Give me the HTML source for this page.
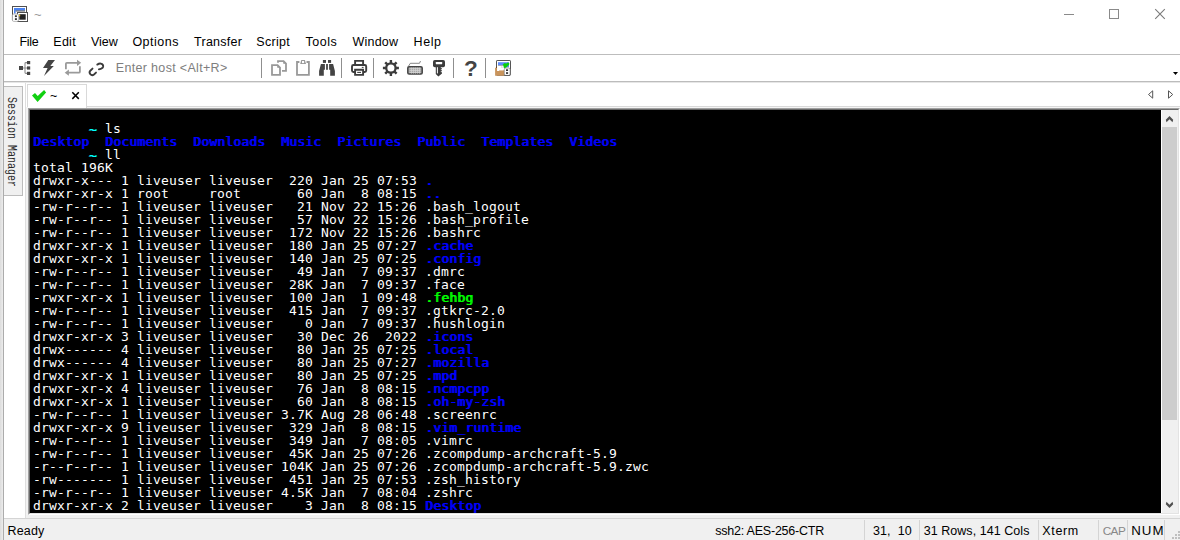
<!DOCTYPE html>
<html><head><meta charset="utf-8"><title>~</title>
<style>
html,body{margin:0;padding:0;}
body{width:1180px;height:540px;position:relative;overflow:hidden;background:#fff;font-family:"Liberation Sans",sans-serif;font-size:12.5px;color:#000;}
.abs{position:absolute;}
#leftedge{left:0;top:0;width:3px;height:540px;background:linear-gradient(90deg,#dcdcdc,#ececec);}
#leftline{left:3px;top:0;width:1px;height:540px;background:#acacac;}
#title{left:34px;top:7px;font-size:13px;color:#999;}
.t{position:absolute;white-space:nowrap;line-height:16px;height:16px;}
#menu .t{top:34px;}
#menuline{left:4px;top:54px;width:1176px;height:1px;background:#bdbdbd;}
#tbline{left:4px;top:81px;width:1176px;height:1px;background:#bcbcbc;}
#tbline2{left:4px;top:82px;width:1176px;height:1px;background:#e6e6e6;}
#host{left:116px;top:60px;color:#7e7e7e;}
.sep{position:absolute;top:58px;width:1px;height:20px;background:#8f8f8f;}
#sm{left:4px;top:86px;width:18px;height:108px;background:#f0f0f0;border:1px solid #bcbcbc;border-left:none;}
#smt{left:16.5px;top:96.5px;font-family:"Liberation Mono",monospace;font-size:12px;line-height:12px;color:#2a2a2a;transform-origin:0 0;transform:rotate(90deg) scaleX(0.833);white-space:nowrap;}
#vline{left:25px;top:83px;width:1px;height:435px;background:#dedede;}
#tab{left:27px;top:84px;width:58px;height:23px;border:1px solid #d9d9d9;border-bottom:none;background:#fff;}
#tabline{left:86px;top:106px;width:1094px;height:1px;background:#d9d9d9;}
#tabline2{left:87px;top:107px;width:1093px;height:1px;background:#f4f4f4;}
#lband{left:26px;top:107px;width:2px;height:408px;background:#f2f2f2;}
#tabt{left:50px;top:88px;}
#termborder{left:28px;top:108px;width:1148px;height:403px;border:2px solid;border-color:#a0a0a0 #fff #fff #a0a0a0;background:#000;}
#termborder2{left:29px;top:109px;width:1148px;height:403px;border:1px solid;border-color:#696969 #e3e3e3 #e3e3e3 #696969;}
#term{left:30px;top:110px;width:1131px;height:403px;background:#000;overflow:hidden;}
#sb{left:1161px;top:110px;width:16px;height:403px;background:#f0f0f0;border-left:1px solid #fff;}
#thumb{left:1162px;top:127px;width:15px;height:293px;background:#cdcdcd;}
#text{position:absolute;left:3px;top:12px;font-family:"DejaVu Sans Mono","Liberation Mono",monospace;font-size:13px;letter-spacing:0.173px;color:#fff;white-space:pre;line-height:13px;}
.ln{height:13px;}
.b{color:#0000ff;text-shadow:1px 0 0 #0000ff;}
.g{color:#00ff00;text-shadow:1px 0 0 #00ff00;}
.c{color:#00ffff;text-shadow:1px 0 0 #00ffff;position:relative;top:1px;left:-0.6px;}
#belowterm{left:26px;top:515px;width:1154px;height:3px;background:#f0f0f0;}
#status{left:4px;top:518px;width:1176px;height:21px;background:#f0f0f0;border-top:1px solid #d4d4d4;}
#status .t{top:4px;}
.ssep{position:absolute;top:1px;width:1px;height:20px;background:#d4d4d4;}
</style></head><body>
<div class="abs" id="leftedge"></div><div class="abs" id="leftline"></div>
<div class="abs t" id="title">~</div>
<div id="menu">
<span class="t" id="m1" style="left:19.60px;letter-spacing:-0.367px;">File</span><span class="t" id="m2" style="left:53.30px;letter-spacing:0.267px;">Edit</span><span class="t" id="m3" style="left:91.00px;letter-spacing:-0.067px;">View</span><span class="t" id="m4" style="left:132.40px;letter-spacing:0.500px;">Options</span><span class="t" id="m5" style="left:194.00px;letter-spacing:0.271px;">Transfer</span><span class="t" id="m6" style="left:256.30px;letter-spacing:0.300px;">Script</span><span class="t" id="m7" style="left:305.50px;letter-spacing:0.525px;">Tools</span><span class="t" id="m8" style="left:352.50px;letter-spacing:0.220px;">Window</span><span class="t" id="m9" style="left:413.50px;letter-spacing:0.600px;">Help</span>
</div>
<div class="abs" id="menuline"></div>
<div class="abs t" id="host" style="left:115.80px;letter-spacing:0.324px;">Enter host &lt;Alt+R&gt;</div>
<div class="sep" style="left:261px"></div><div class="sep" style="left:341px"></div><div class="sep" style="left:373px"></div><div class="sep" style="left:453px"></div><div class="sep" style="left:485px"></div>
<div class="abs" id="tbline"></div><div class="abs" id="tbline2"></div>
<div class="abs" id="sm"></div>
<div class="abs" id="smt">Session Manager</div>
<div class="abs" id="vline"></div>
<div class="abs" id="tab"></div>
<div class="abs" id="tabline"></div><div class="abs" id="tabline2"></div><div class="abs" id="lband"></div>
<div class="abs t" id="tabt">~</div>
<div class="abs" id="termborder"></div><div class="abs" id="termborder2"></div>
<div class="abs" id="term"><div id="text"><div class="ln">       <span class="c">~</span> ls</div><div class="ln"><span class="b">Desktop</span>  <span class="b">Documents</span>  <span class="b">Downloads</span>  <span class="b">Music</span>  <span class="b">Pictures</span>  <span class="b">Public</span>  <span class="b">Templates</span>  <span class="b">Videos</span></div><div class="ln">       <span class="c">~</span> ll</div><div class="ln">total 196K</div><div class="ln">drwxr-x--- 1 liveuser liveuser  220 Jan 25 07:53 <span class="b">.</span></div><div class="ln">drwxr-xr-x 1 root     root       60 Jan  8 08:15 <span class="b">..</span></div><div class="ln">-rw-r--r-- 1 liveuser liveuser   21 Nov 22 15:26 .bash_logout</div><div class="ln">-rw-r--r-- 1 liveuser liveuser   57 Nov 22 15:26 .bash_profile</div><div class="ln">-rw-r--r-- 1 liveuser liveuser  172 Nov 22 15:26 .bashrc</div><div class="ln">drwxr-xr-x 1 liveuser liveuser  180 Jan 25 07:27 <span class="b">.cache</span></div><div class="ln">drwxr-xr-x 1 liveuser liveuser  140 Jan 25 07:25 <span class="b">.config</span></div><div class="ln">-rw-r--r-- 1 liveuser liveuser   49 Jan  7 09:37 .dmrc</div><div class="ln">-rw-r--r-- 1 liveuser liveuser  28K Jan  7 09:37 .face</div><div class="ln">-rwxr-xr-x 1 liveuser liveuser  100 Jan  1 09:48 <span class="g">.fehbg</span></div><div class="ln">-rw-r--r-- 1 liveuser liveuser  415 Jan  7 09:37 .gtkrc-2.0</div><div class="ln">-rw-r--r-- 1 liveuser liveuser    0 Jan  7 09:37 .hushlogin</div><div class="ln">drwxr-xr-x 3 liveuser liveuser   30 Dec 26  2022 <span class="b">.icons</span></div><div class="ln">drwx------ 4 liveuser liveuser   80 Jan 25 07:25 <span class="b">.local</span></div><div class="ln">drwx------ 4 liveuser liveuser   80 Jan 25 07:27 <span class="b">.mozilla</span></div><div class="ln">drwxr-xr-x 1 liveuser liveuser   80 Jan 25 07:25 <span class="b">.mpd</span></div><div class="ln">drwxr-xr-x 4 liveuser liveuser   76 Jan  8 08:15 <span class="b">.ncmpcpp</span></div><div class="ln">drwxr-xr-x 1 liveuser liveuser   60 Jan  8 08:15 <span class="b">.oh-my-zsh</span></div><div class="ln">-rw-r--r-- 1 liveuser liveuser 3.7K Aug 28 06:48 .screenrc</div><div class="ln">drwxr-xr-x 9 liveuser liveuser  329 Jan  8 08:15 <span class="b">.vim_runtime</span></div><div class="ln">-rw-r--r-- 1 liveuser liveuser  349 Jan  7 08:05 .vimrc</div><div class="ln">-rw-r--r-- 1 liveuser liveuser  45K Jan 25 07:26 .zcompdump-archcraft-5.9</div><div class="ln">-r--r--r-- 1 liveuser liveuser 104K Jan 25 07:26 .zcompdump-archcraft-5.9.zwc</div><div class="ln">-rw------- 1 liveuser liveuser  451 Jan 25 07:53 .zsh_history</div><div class="ln">-rw-r--r-- 1 liveuser liveuser 4.5K Jan  7 08:04 .zshrc</div><div class="ln">drwxr-xr-x 2 liveuser liveuser    3 Jan  8 08:15 <span class="b">Desktop</span></div></div></div>
<div class="abs" id="sb"></div><div class="abs" id="thumb"></div>
<div class="abs" id="belowterm"></div>
<div class="abs" id="status">
<i class="ssep" style="left:860px"></i><i class="ssep" style="left:915px"></i><i class="ssep" style="left:1034px"></i><i class="ssep" style="left:1094px"></i><i class="ssep" style="left:1123px"></i><i class="ssep" style="left:1160px"></i>
<span class="t" id="s1" style="left:3.60px;letter-spacing:0.150px;">Ready</span>
<span class="t" id="s2" style="left:711.30px;letter-spacing:-0.225px;">ssh2: AES-256-CTR</span>
<span class="t" id="s3" style="left:868.90px;letter-spacing:0.100px;">31,&nbsp; 10</span>
<span class="t" id="s4" style="left:919.70px;letter-spacing:0.050px;">31 Rows, 141 Cols</span>
<span class="t" id="s5" style="left:1038.30px;letter-spacing:0.650px;">Xterm</span>
<span class="t" id="s6" style="left:1098.70px;letter-spacing:-0.600px;color:#888;font-size:11.8px">CAP</span>
<span class="t" id="s7" style="left:1127.20px;letter-spacing:1.050px;font-size:13.3px">NUM</span>
</div>
<svg class="abs" style="left:0;top:0" width="1180" height="540" viewBox="0 0 1180 540">
<!-- title icon -->
<g id="ticon">
<rect x="12.500" y="6.500" width="14" height="13" fill="#fff" stroke="#505050"/>
<rect x="14" y="8" width="11" height="2.600" fill="#4b83f0"/>
<rect x="14" y="8" width="1.600" height="5.500" fill="#4b83f0"/>
<path d="M15.600 11h9.400" stroke="#444" stroke-width="0.900" fill="none"/>
<rect x="17.500" y="12.500" width="10" height="9" fill="#fff" stroke="#505050"/>
<rect x="19.300" y="14.200" width="6.400" height="5.500" fill="#222"/>
<rect x="18.800" y="14.800" width="1.400" height="1.400" fill="#f5c400"/>
<rect x="12.300" y="14" width="6.300" height="7.400" rx="1.500" fill="#fff" stroke="#888" stroke-width="0.600"/>
<rect x="14.900" y="15.300" width="2" height="1.800" fill="#333"/>
<rect x="14.900" y="18.200" width="2" height="1.800" fill="#333"/>
</g>
<!-- window controls -->
<path d="M1064 14.500h10" stroke="#8a8a8a" stroke-width="1" fill="none"/>
<rect x="1109.500" y="9.500" width="9" height="9" stroke="#8a8a8a" fill="none"/>
<path d="M1155.200 9.200l9.600 9.600M1164.800 9.200l-9.600 9.600" stroke="#7a7a7a" stroke-width="1.100" fill="none"/>
<!-- toolbar: session tree -->
<g fill="#444">
<rect x="19" y="66" width="4" height="4"/>
<rect x="27" y="61" width="3.200" height="3.200"/>
<rect x="27" y="66.400" width="3.200" height="3.200"/>
<rect x="27" y="71.800" width="3.200" height="3.200"/>
</g>
<path d="M27 62.600h-1.200a0.800 0.800 0 0 0 -0.800 0.800v9.200a0.800 0.800 0 0 0 0.800 0.800h1.200M23 68h4" stroke="#8e8e8e" stroke-width="1.100" fill="none"/>
<!-- lightning -->
<path d="M48.300 60H55l-4.700 6h3.500L44 76l3.600-8H43z" fill="#444"/>
<!-- reconnect -->
<g fill="none" stroke="#9a9a9a" stroke-width="1.800">
<path d="M65.900 69.200v-5.400a1 1 0 0 1 1-1H78"/>
<path d="M79.900 66.300v5.400a1 1 0 0 1 -1 1H68"/>
</g>
<path d="M77 59.700l4.200 3.100-4.200 3.100z" fill="#9a9a9a"/>
<path d="M68.900 69.600l-4.200 3.100 4.200 3.100z" fill="#9a9a9a"/>
<!-- link -->
<g fill="none" stroke="#3c3c3c" stroke-width="1.900" stroke-linecap="round">
<path d="M92.500 68.600L90.300 70.700Q88.800 72.400 90.300 74.200Q92 76 94 74.500L96 72.600"/>
<path d="M97.300 64.600Q99 63.400 100.800 63.600Q103.600 64.200 103.100 66.800Q102.600 68.700 98.900 69.400"/>
</g>
<!-- copy -->
<g fill="none" stroke="#999" stroke-width="1.800" stroke-linejoin="miter">
<path d="M272 65.100h5.600l2.400 2.400v7.400h-8z"/>
<path d="M278 62.700v-1.600h5.600l2.400 2.400v7.400h-4"/>
</g>
<path d="M277.200 64.600v3.200h3.300zM283.200 60.600v3.200h3.300z" fill="#999"/>
<!-- paste -->
<g fill="none" stroke="#999" stroke-width="1.800">
<path d="M299.400 62h-2.400v12.900h11.900v-12.900h-2.400"/>
</g>
<path d="M300.200 63.900l1.100-3.900h3.600l1.100 3.900z" fill="#999"/>
<rect x="302" y="61" width="2.100" height="2.100" fill="#fff"/>
<!-- binoculars -->
<g fill="#444">
<rect x="322.900" y="60" width="3.100" height="2.900"/>
<rect x="328" y="60" width="3.100" height="2.900"/>
<rect x="326.100" y="64" width="1.800" height="5.800"/>
<path d="M320.900 64h4v5.800h-1.100v6h-4.700v-4.700z"/>
<path d="M333.100 64h-4v5.800h1.100v6h4.700v-4.700z"/>
</g>
<!-- printer -->
<g fill="none" stroke="#3c3c3c" stroke-width="1.900">
<path d="M355.100 64.500v-3.600h8v3.600"/>
<path d="M355 72h-1.500a1.500 1.500 0 0 1 -1.500 -1.500v-4a1.500 1.500 0 0 1 1.500 -1.500h11.200a1.500 1.500 0 0 1 1.500 1.500v4a1.500 1.500 0 0 1 -1.500 1.500h-1.500"/>
<path d="M355.100 69.700h8v5.200h-8z"/>
<path d="M357.200 72.400h3.800" stroke-width="1.100"/>
<path d="M361.800 67.400h1.800" stroke-width="1"/>
</g>
<!-- gear -->
<g transform="translate(390.900 68)">
<circle r="4.700" fill="none" stroke="#3c3c3c" stroke-width="2.300"/>
<g stroke="#3c3c3c" stroke-width="2.400">
<path d="M0 -5v-3M0 5v3M-5 0h-3M5 0h3"/>
<path d="M3.600 -3.600l2.100 -2.100M-3.600 -3.600l-2.100 -2.100M3.600 3.600l2.100 2.100M-3.600 3.600l-2.100 2.100"/>
</g>
</g>
<!-- keyboard -->
<rect x="407.800" y="66.800" width="14.400" height="7.300" rx="1.300" fill="#a8a8a8" stroke="#444" stroke-width="1.500"/>
<path d="M409.500 68.300h11M409.500 70.400h11M409.500 72.500h11" stroke="#d4d4d4" stroke-width="0.800" fill="none"/>
<path d="M411.500 67.600v6M413.500 67.600v6M415.500 67.600v6M417.500 67.600v6M419.500 67.600v6" stroke="#d4d4d4" stroke-width="0.700" fill="none"/>
<path d="M408.300 66.500l2-3.200h9.200l1-2.300" stroke="#555" stroke-width="0.700" fill="none"/>
<!-- key -->
<g>
<rect x="433" y="60" width="12" height="7.200" rx="1.800" fill="#3c3c3c"/>
<rect x="435.800" y="62" width="6.400" height="2.200" rx="0.400" fill="#fff"/>
<path d="M435.800 67h5v1.200h1.200v1h-1.200v1h1.200v1h-1.200v1h1.200v1.200l-3.600 3.200l-2.600 -2.600z" fill="#3c3c3c"/>
<path d="M437.400 67.200v6.200" stroke="#fff" stroke-width="1" fill="none"/>
</g>
<!-- last icon -->
<g>
<rect x="496.500" y="60.500" width="14" height="14.800" rx="0.600" fill="#fff" stroke="#555"/>
<rect x="498" y="62.200" width="11" height="3" fill="#5b8cff"/>
<rect x="504.500" y="65" width="4.500" height="2.200" fill="#5b8cff"/>
<path d="M498 65.600h5.500" stroke="#888" stroke-width="0.700" fill="none"/>
<path d="M495.100 67.800h2v3.200h2v-0.800h5v5.600h-9z" fill="#c9945c"/>
<path d="M497.300 66h3.800l2.200 1.800v2.400h-4.300v0.800h-1.700z" fill="#fff"/>
<path d="M501.100 66v1.800h2.200z" fill="#d8d8d8"/>
<rect x="496.100" y="66.800" width="0.900" height="1" fill="#6a3a10"/>
<path d="M503 64.500l2-1.200l1 0.700l1.500-1l1.500 0.200v1.300l-3.500 3.300l-1.300 0.200l-0.400-2z" fill="#06cf06" stroke="#06cf06" stroke-width="0.600" stroke-linejoin="round"/>
<rect x="504.300" y="68" width="5.800" height="7.400" rx="1.400" fill="#fff" stroke="#777" stroke-width="0.700"/>
<path d="M504.600 75.500h5.200" stroke="#555" stroke-width="0.800"/>
<rect x="506" y="69.300" width="2.100" height="1.700" fill="#333"/>
<rect x="506" y="72.200" width="2.100" height="1.700" fill="#333"/>
</g>
<!-- tab check -->
<path d="M32 95.500l3-2.600l2.700 3.100l6.400-6l2 2.400l-8.500 9.600z" fill="#11d011"/>
<path d="M72.300 92.300l6.500 6.600M78.800 92.300l-6.500 6.600" stroke="#000" stroke-width="1.500" fill="none"/>
<!-- tab nav arrows -->
<path d="M1152.700 90.800v7.400l-4.200-3.700z" fill="none" stroke="#555" stroke-width="1"/>
<path d="M1168.500 90.800v7.400l4.200-3.700z" fill="none" stroke="#555" stroke-width="1"/>
<!-- toolbar dropdown arrow -->
<path d="M1173 72h5l-2.500 3z" fill="#000"/>
<!-- scrollbar arrows -->
<path d="M1169.500 116l3.700 3.700l-0.700 2.500l-3-2.900l-3 2.900l-0.700-2.500z" fill="#505050"/>
<path d="M1169.500 508l3.700-3.700l-0.700-2.500l-3 2.900l-3-2.900l-0.700 2.500z" fill="#505050"/>
<!-- grip -->
<g fill="#bfbfbf">
<rect x="1178" y="531" width="2" height="2"/>
<rect x="1175" y="534" width="2" height="2"/><rect x="1178" y="534" width="2" height="2"/>
<rect x="1172" y="537" width="2" height="2"/><rect x="1175" y="537" width="2" height="2"/><rect x="1178" y="537" width="2" height="2"/>
</g>
</svg>
<div class="abs" id="q" style="left:463.900px;top:56.800px;font-size:22.500px;font-weight:bold;color:#444;line-height:24px;">?</div>

</body></html>
